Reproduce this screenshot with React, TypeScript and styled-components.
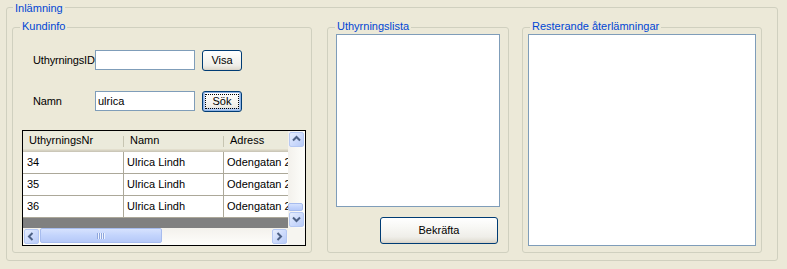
import React from "react";
import styled, { createGlobalStyle, css } from "styled-components";

const Global = createGlobalStyle`
  html, body { margin: 0; padding: 0; background: #ECE9D8; }
  body { font-family: "Liberation Sans", Arial, sans-serif; font-size: 11px; color: #000; }
  * { box-sizing: border-box; }
`;

const Window = styled.div`
  width: 787px;
  height: 269px;
  padding: 7px 0 0 6px;
  background: #ECE9D8;
`;

const Group = styled.section<{ $w: number; $h: number; $ml?: number }>`
  position: relative;
  flex: none;
  width: ${(p) => p.$w}px;
  height: ${(p) => p.$h}px;
  margin-left: ${(p) => p.$ml ?? 0}px;
  border: 1px solid #D0D0BF;
  border-radius: 3px;
`;

const OuterBody = styled.div`
  display: flex;
  padding: 19px 0 0 5px;
`;

const Legend = styled.span<{ $top: number; $left: number }>`
  position: absolute;
  top: ${(p) => p.$top}px;
  left: ${(p) => p.$left}px;
  padding: 0 2px;
  background: #ECE9D8;
  color: #0046D5;
  line-height: 13px;
  white-space: nowrap;
`;

const KundBody = styled.div`
  display: flex;
  flex-direction: column;
  padding: 22px 0 0 9px;
`;

const FormRow = styled.div<{ $mt?: number }>`
  display: grid;
  grid-template-columns: 62px 107px 40px;
  align-items: start;
  height: 21px;
  padding-left: 11px;
  margin-top: ${(p) => p.$mt ?? 0}px;
`;

const Label = styled.label`
  align-self: center;
  line-height: 13px;
  white-space: nowrap;
  letter-spacing: -0.15px;
`;

const TextBox = styled.input`
  width: 100px;
  height: 20px;
  border: 1px solid #7F9DB9;
  background: #fff;
  padding: 0 2px;
  font: 11px "Liberation Sans", Arial, sans-serif;
  color: #000;
  outline: none;
`;

const XpButton = styled.button<{ $w: number; $h: number; $focused?: boolean }>`
  display: flex;
  width: ${(p) => p.$w}px;
  height: ${(p) => p.$h}px;
  padding: 2px;
  border: 1px solid #003C74;
  border-radius: 3px;
  background: linear-gradient(to bottom, #ffffff 0%, #f8f8f5 35%, #efeee9 75%, #e3e0d6 92%, #d6d0c5 100%);
  font: 11px "Liberation Sans", Arial, sans-serif;
  color: #000;
  cursor: default;
  ${(p) =>
    p.$focused &&
    css`
      box-shadow: inset 0 0 0 1px #8DB2E3, inset 0 -1px 0 2px #B6CEF5;
    `}
`;

const ButtonFace = styled.span<{ $focused?: boolean }>`
  flex: 1;
  display: flex;
  align-items: center;
  justify-content: center;
  border: 1px dotted ${(p) => (p.$focused ? "#000" : "transparent")};
  line-height: 13px;
`;

const Grid = styled.div`
  display: grid;
  grid-template-columns: 265px 17px;
  grid-template-rows: 97px 17px;
  width: 284px;
  height: 116px;
  margin-top: 18px;
  border: 1px solid #000;
  background: #ECE9D8;
`;

const GridView = styled.div`
  overflow: hidden;
  background: #808080;
`;

const Table = styled.div`
  display: grid;
  grid-template-columns: 101px 100px 100px;
  width: 301px;
`;

const HeadCell = styled.div`
  position: relative;
  height: 21px;
  padding: 0 0 2px 6px;
  display: flex;
  align-items: center;
  line-height: 13px;
  white-space: nowrap;
  background: #EBEADB;
  box-shadow: inset 0 -1px 0 #CBC7B8, inset 0 -2px 0 #D6D2C2, inset 0 -3px 0 #E2DECD;
  &::after {
    content: "";
    position: absolute;
    right: 0;
    top: 5px;
    bottom: 5px;
    width: 1px;
    background: #C7C5B2;
    box-shadow: 1px 0 0 #fff;
  }
`;

const Cell = styled.div<{ $first?: boolean }>`
  height: 22px;
  display: flex;
  align-items: center;
  padding-left: ${(p) => (p.$first ? 4 : 3)}px;
  line-height: 13px;
  white-space: nowrap;
  overflow: hidden;
  background: #fff;
  border-right: 1px solid #ACA899;
  border-bottom: 1px solid #ACA899;
`;

const VScroll = styled.div`
  display: flex;
  flex-direction: column;
  background: linear-gradient(to right, #F3F1EC, #FEFEFB);
`;

const HScroll = styled.div`
  display: flex;
  background: linear-gradient(to bottom, #F3F1EC, #FEFEFB);
`;

const Track = styled.div<{ $vertical?: boolean }>`
  flex: 1;
  display: flex;
  flex-direction: ${(p) => (p.$vertical ? "column" : "row")};
  justify-content: ${(p) => (p.$vertical ? "flex-end" : "flex-start")};
`;

const ScrollButton = styled.div`
  flex: none;
  width: 15px;
  height: 15px;
  margin: 1px;
  display: flex;
  align-items: center;
  justify-content: center;
  border-radius: 2px;
  border: 1px solid #B5C8F3;
  background: linear-gradient(135deg, #E6EEFD 0%, #CCDAFC 55%, #B8CBF7 100%);
`;

const Thumb = styled.div<{ $w: number; $h: number }>`
  flex: none;
  width: ${(p) => p.$w}px;
  height: ${(p) => p.$h}px;
  display: flex;
  align-items: center;
  justify-content: center;
  border-radius: 2px;
  border: 1px solid #A7BCEE;
  background: linear-gradient(to bottom, #D6E2FE 0%, #C3D4FC 50%, #B6C9F8 100%);
`;

const Grip = styled.span`
  width: 8px;
  height: 6px;
  background: repeating-linear-gradient(to right, #8EA6DD 0 1px, #EEF3FE 1px 2px);
`;

const Corner = styled.div`
  background: #F6F5F0;
`;

const ListBox = styled.div<{ $w: number; $h: number }>`
  flex: none;
  width: ${(p) => p.$w}px;
  height: ${(p) => p.$h}px;
  background: #fff;
  border: 1px solid #7F9DB9;
`;

const ListBody = styled.div<{ $px: number }>`
  display: flex;
  flex-direction: column;
  padding: 6px ${(p) => p.$px}px 0;
`;

const ConfirmRow = styled.div`
  display: flex;
  justify-content: flex-end;
  margin-top: 10px;
  padding-right: 2px;
`;

const Arrow = ({ dir }: { dir: "up" | "down" | "left" | "right" }) => {
  const pts: Record<string, string> = {
    up: "1,5.5 4.5,2 8,5.5",
    down: "1,2.5 4.5,6 8,2.5",
    left: "5.5,1 2,4.5 5.5,8",
    right: "2.5,1 6,4.5 2.5,8",
  };
  return (
    <svg width="9" height="9" viewBox="0 0 9 9">
      <polyline points={pts[dir]} fill="none" stroke="#4D6185" strokeWidth="2" />
    </svg>
  );
};

const rows = [
  { nr: "34", namn: "Ulrica Lindh", adress: "Odengatan 22" },
  { nr: "35", namn: "Ulrica Lindh", adress: "Odengatan 22" },
  { nr: "36", namn: "Ulrica Lindh", adress: "Odengatan 22" },
];

export default function App() {
  return (
    <>
      <Global />
      <Window>
        <Group $w={772} $h={254}>
          <Legend $top={-6} $left={6}>Inlämning</Legend>
          <OuterBody>
            <Group $w={300} $h={226}>
              <Legend $top={-8} $left={7}>Kundinfo</Legend>
              <KundBody>
                <FormRow>
                  <Label>UthyrningsID</Label>
                  <TextBox defaultValue="" />
                  <XpButton $w={40} $h={21}>
                    <ButtonFace>Visa</ButtonFace>
                  </XpButton>
                </FormRow>
                <FormRow $mt={20}>
                  <Label>Namn</Label>
                  <TextBox defaultValue="ulrica" />
                  <XpButton $w={40} $h={21} $focused>
                    <ButtonFace $focused>Sök</ButtonFace>
                  </XpButton>
                </FormRow>
                <Grid>
                  <GridView>
                    <Table>
                      <HeadCell>UthyrningsNr</HeadCell>
                      <HeadCell>Namn</HeadCell>
                      <HeadCell>Adress</HeadCell>
                      {rows.map((r) => (
                        <React.Fragment key={r.nr}>
                          <Cell $first>{r.nr}</Cell>
                          <Cell>{r.namn}</Cell>
                          <Cell>{r.adress}</Cell>
                        </React.Fragment>
                      ))}
                    </Table>
                  </GridView>
                  <VScroll>
                    <ScrollButton>
                      <Arrow dir="up" />
                    </ScrollButton>
                    <Track $vertical>
                      <Thumb $w={15} $h={8} />
                    </Track>
                    <ScrollButton>
                      <Arrow dir="down" />
                    </ScrollButton>
                  </VScroll>
                  <HScroll>
                    <ScrollButton>
                      <Arrow dir="left" />
                    </ScrollButton>
                    <Track>
                      <Thumb $w={122} $h={15}>
                        <Grip />
                      </Thumb>
                    </Track>
                    <ScrollButton>
                      <Arrow dir="right" />
                    </ScrollButton>
                  </HScroll>
                  <Corner />
                </Grid>
              </KundBody>
            </Group>
            <Group $w={182} $h={226} $ml={15}>
              <Legend $top={-8} $left={7}>Uthyrningslista</Legend>
              <ListBody $px={8}>
                <ListBox $w={164} $h={173} />
                <ConfirmRow>
                  <XpButton $w={118} $h={27}>
                    <ButtonFace>Bekräfta</ButtonFace>
                  </XpButton>
                </ConfirmRow>
              </ListBody>
            </Group>
            <Group $w={240} $h={226} $ml={13}>
              <Legend $top={-8} $left={7}>Resterande återlämningar</Legend>
              <ListBody $px={5}>
                <ListBox $w={228} $h={212} />
              </ListBody>
            </Group>
          </OuterBody>
        </Group>
      </Window>
    </>
  );
}
